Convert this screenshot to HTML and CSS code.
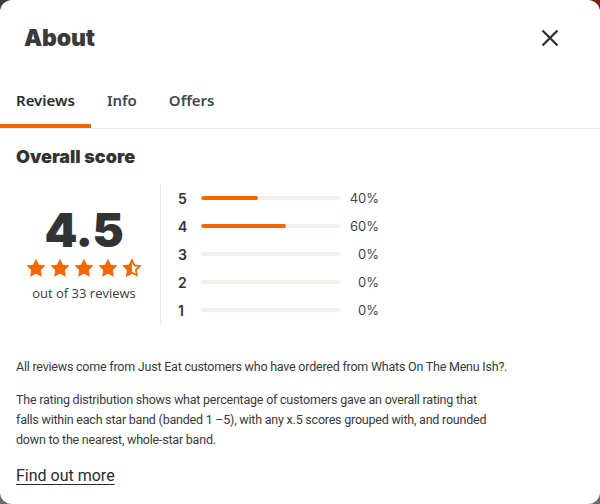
FILE: index.html
```html
<!DOCTYPE html>
<html lang="en">
<head>
<meta charset="utf-8">
<title>About</title>
<link rel="stylesheet" href="styles.css">
</head>
<body>
<div class="modal">
  <header class="modal-header">
    <h1 class="title">About</h1>
    <button class="close" aria-label="Close">
      <svg width="18" height="18" viewBox="0 0 18 18"><path d="M1.5 1.5L16.5 16.5M16.5 1.5L1.5 16.5" stroke="#333" stroke-width="2.4" stroke-linecap="butt"/></svg>
    </button>
  </header>
  <nav class="tabs">
    <div class="tab active">Reviews</div>
    <div class="tab">Info</div>
    <div class="tab">Offers</div>
  </nav>
  <section class="content">
    <h2 class="section-title">Overall score</h2>
    <div class="score">
      <div class="summary">
        <div class="big">4.5</div>
        <div class="stars">
          <svg class="star" viewBox="0 0 24 24"><path d="M12 0.8L15.53 7.95 23.41 9.09 17.71 14.65 19.05 22.51 12 18.8 4.95 22.51 6.29 14.65 0.59 9.09 8.47 7.95Z" fill="#f36805"/></svg>
          <svg class="star" viewBox="0 0 24 24"><path d="M12 0.8L15.53 7.95 23.41 9.09 17.71 14.65 19.05 22.51 12 18.8 4.95 22.51 6.29 14.65 0.59 9.09 8.47 7.95Z" fill="#f36805"/></svg>
          <svg class="star" viewBox="0 0 24 24"><path d="M12 0.8L15.53 7.95 23.41 9.09 17.71 14.65 19.05 22.51 12 18.8 4.95 22.51 6.29 14.65 0.59 9.09 8.47 7.95Z" fill="#f36805"/></svg>
          <svg class="star" viewBox="0 0 24 24"><path d="M12 0.8L15.53 7.95 23.41 9.09 17.71 14.65 19.05 22.51 12 18.8 4.95 22.51 6.29 14.65 0.59 9.09 8.47 7.95Z" fill="#f36805"/></svg>
          <svg class="star" viewBox="0 0 24 24"><defs><clipPath id="half"><rect x="0" y="0" width="12" height="24"/></clipPath></defs><path d="M12 2.9L14.9 8.8 21.3 9.7 16.7 14.2 17.8 20.6 12 17.6 6.2 20.6 7.3 14.2 2.7 9.7 9.1 8.8Z" fill="#fff" stroke="#f36805" stroke-width="2.2" stroke-linejoin="miter"/><path d="M12 0.8L15.53 7.95 23.41 9.09 17.71 14.65 19.05 22.51 12 18.8 4.95 22.51 6.29 14.65 0.59 9.09 8.47 7.95Z" fill="#f36805" clip-path="url(#half)"/></svg>
        </div>
        <div class="count">out of 33 reviews</div>
      </div>
      <div class="bars">
        <div class="row"><span class="lbl">5</span><span class="track"><span class="fill" style="width:41%"></span></span><span class="pct">40%</span></div>
        <div class="row"><span class="lbl">4</span><span class="track"><span class="fill" style="width:61%"></span></span><span class="pct">60%</span></div>
        <div class="row"><span class="lbl">3</span><span class="track"></span><span class="pct">0%</span></div>
        <div class="row"><span class="lbl">2</span><span class="track"></span><span class="pct">0%</span></div>
        <div class="row"><span class="lbl">1</span><span class="track"></span><span class="pct">0%</span></div>
      </div>
    </div>
    <div class="notes">
      <p>All reviews come from Just Eat customers who have ordered from Whats On The Menu Ish?.</p>
      <p>The rating distribution shows what percentage of customers gave an overall rating that<br>falls within each star band (banded 1 –5), with any x.5 scores grouped with, and rounded<br>down to the nearest, whole-star band.</p>
      <a class="more" href="#">Find out more</a>
    </div>
  </section>
</div>
</body>
</html>
```
FILE: styles.css
```css
* { box-sizing: border-box; }
html, body { margin: 0; padding: 0; }
body {
  width: 600px;
  height: 504px;
  overflow: hidden;
  background:
    linear-gradient(to bottom, transparent 50%, #6a6a6a 50%),
    linear-gradient(to right, #3e3e3e 0%, #7a1e12 100%);
  font-family: "Noto Sans", "Liberation Sans", sans-serif;
  color: #242e30;
}
.modal {
  width: 600px;
  height: 504px;
  background: #fff;
  border-radius: 12px;
  overflow: hidden;
}
.modal-header {
  height: 76px;
  display: flex;
  align-items: center;
  justify-content: space-between;
  padding: 0 29px 0 24px;
}
.title {
  margin: 0;
  font-family: "Inter", "DejaVu Sans", sans-serif;
  font-weight: 900;
  font-size: 23px;
  letter-spacing: -0.2px;
  color: #3a3a3a;
}
.close {
  width: 42px;
  height: 42px;
  border: 0;
  background: none;
  padding: 0;
  display: flex;
  align-items: center;
  justify-content: center;
}
.tabs {
  display: flex;
  height: 53px;
  border-bottom: 1px solid #e8e8e8;
}
.tab {
  position: relative;
  padding: 0 16px 4px;
  display: flex;
  align-items: center;
  font-size: 15px;
  font-weight: 600;
  color: #3c4a4d;
}
.tab.active { color: #242e30; }
.tab.active::after {
  content: "";
  position: absolute;
  left: 0;
  right: 0;
  bottom: 0;
  height: 4px;
  background: #f36805;
}
.content { padding: 16px; }
.section-title {
  margin: 0;
  font-family: "Inter", "DejaVu Sans", sans-serif;
  font-weight: 900;
  font-size: 18px;
  line-height: 24px;
  color: #333;
}
.score {
  display: flex;
  align-items: center;
  margin-top: 15px;
}
.summary {
  width: 136px;
  margin-right: 8px;
  display: flex;
  flex-direction: column;
  align-items: center;
}
.big {
  font-family: "Inter", "DejaVu Sans", sans-serif;
  font-weight: 900;
  font-size: 47px;
  line-height: 48px;
  letter-spacing: -0.5px;
  color: #333;
}
.stars {
  display: flex;
  gap: 4px;
  margin-top: 4px;
}
.star { width: 20px; height: 20px; display: block; overflow: visible; }
.count {
  margin-top: 6px;
  font-family: "Open Sans", sans-serif;
  font-size: 13px;
  line-height: 18px;
  color: #3a3a3a;
}
.bars {
  border-left: 1px solid #e6e6e6;
  padding-left: 17px;
}
.row {
  display: flex;
  align-items: center;
  height: 28px;
}
.lbl {
  width: 23px;
  font-family: "Inter", sans-serif;
  font-weight: 600;
  font-size: 14px;
  color: #333;
}
.track {
  width: 139px;
  height: 4px;
  border-radius: 2px;
  background: #f3f0eb;
  overflow: hidden;
  display: flex;
}
.fill {
  height: 4px;
  border-radius: 2px;
  background: #f36805;
}
.pct {
  width: 39px;
  text-align: right;
  font-family: "Inter", sans-serif;
  font-size: 13px;
  color: #444;
}
.notes {
  margin-top: 33px;
  width: 520px;
  font-family: "Roboto", sans-serif;
  font-size: 12.5px;
  letter-spacing: -0.22px;
  line-height: 20px;
  color: #3a3a3a;
}
.notes p { margin: 0 0 13px; }
.notes p + p { line-height: 20px; }
.more {
  display: inline-block;
  margin-top: 3px;
  font-family: "Roboto", sans-serif;
  letter-spacing: 0;
  color: #242e30;
  font-size: 16px;
  text-decoration: underline;
  text-underline-offset: 3px;
}
```
